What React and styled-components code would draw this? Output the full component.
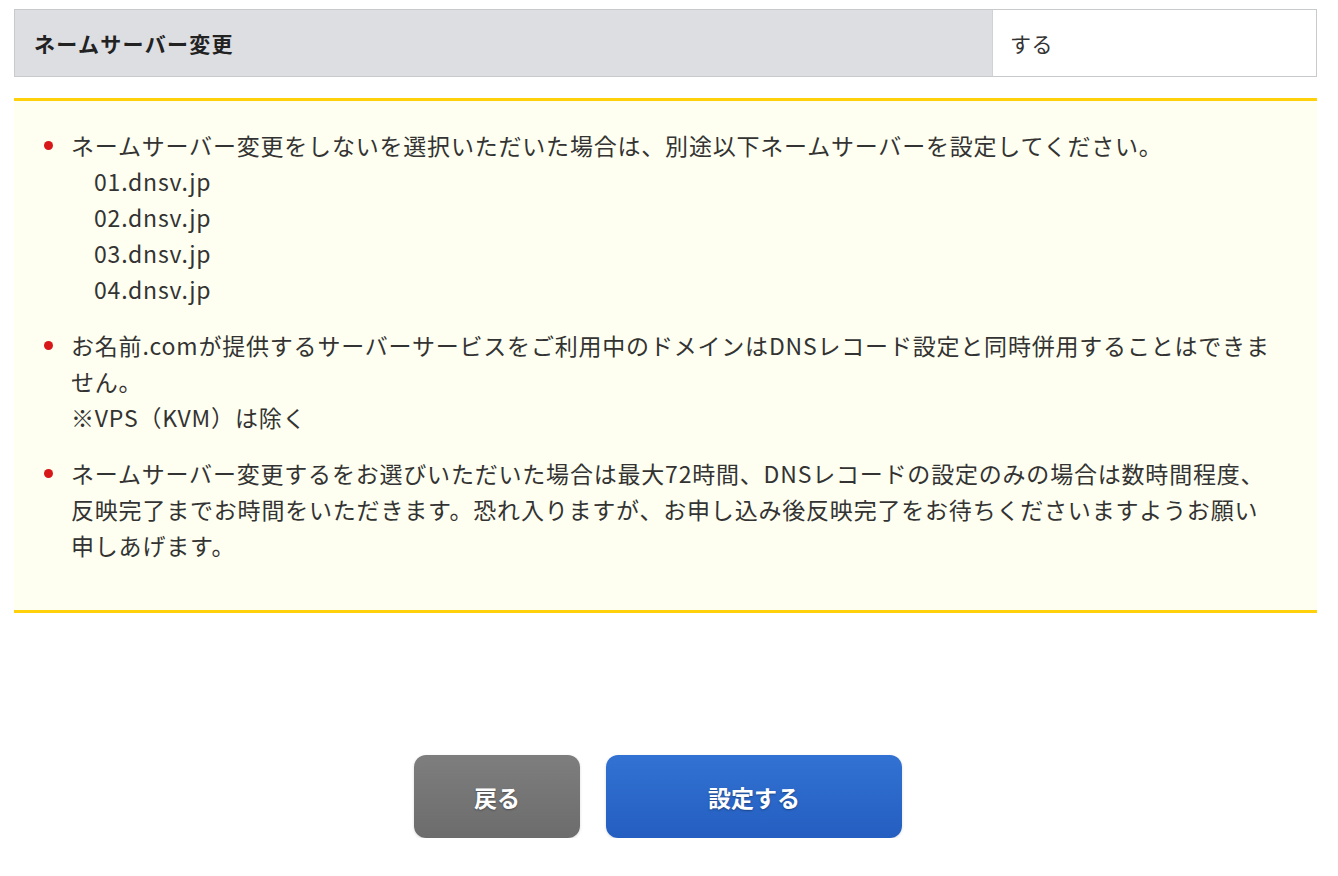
import styled, { createGlobalStyle } from "styled-components";

const GlobalStyle = createGlobalStyle`
  body {
    margin: 0;
    background: #fff;
    font-family: "Noto Sans CJK JP", "Liberation Sans", sans-serif;
    color: #333;
  }
`;

const Page = styled.div`
  padding: 9px 21px 0 14px;
`;

const SettingTable = styled.div`
  display: grid;
  grid-template-columns: 978px 1fr;
  height: 68px;
  border: 1px solid #c9cacc;
  box-sizing: border-box;
`;

const HeadCell = styled.div`
  display: flex;
  align-items: center;
  padding-left: 19px;
  background: #dcdee2;
  border-right: 1px solid #d0d2d6;
  font-size: 21px;
  letter-spacing: 1.3px;
  font-weight: bold;
  color: #222;
`;

const ValueCell = styled.div`
  display: flex;
  align-items: center;
  padding-left: 17px;
  background: #fff;
  font-size: 21px;
  letter-spacing: 0.5px;
  color: #333;
`;

const NoticeBox = styled.div`
  margin-top: 21px;
  background: #fefff0;
  border-top: 3px solid #ffd10a;
  border-bottom: 3px solid #ffd10a;
  padding: 26px 0 27px;
`;

const NoticeList = styled.ul`
  list-style: none;
  margin: 0 0 20px;
  padding: 0 34px 0 57px;
`;

const NoticeItem = styled.li`
  position: relative;
  font-size: 23px;
  line-height: 36px;
  letter-spacing: 0.8px;
  color: #333;

  & + & {
    margin-top: 20px;
  }

  &::before {
    content: "";
    position: absolute;
    left: -27px;
    top: 14px;
    width: 9px;
    height: 9px;
    border-radius: 50%;
    background: #d81818;
  }
`;

const ServerList = styled.div`
  padding-left: 23px;
`;

const ButtonRow = styled.div`
  display: flex;
  justify-content: center;
  gap: 26px;
  margin-top: 142px;
  padding-right: 15px;
`;

const Button = styled.button`
  width: ${(p) => (p.$primary ? "296px" : "166px")};
  height: 83px;
  border: none;
  border-radius: 12px;
  background: ${(p) =>
    p.$primary
      ? "linear-gradient(#3272d2, #245ec0)"
      : "linear-gradient(#7e7e7e, #6c6c6c)"};
  color: #fff;
  font-family: inherit;
  font-size: 23px;
  font-weight: bold;
  text-shadow: 0 1px 2px rgba(0, 0, 0, 0.35);
  box-shadow: 0 1px 3px rgba(0, 0, 0, 0.15);
  cursor: pointer;
`;

const servers = ["01.dnsv.jp", "02.dnsv.jp", "03.dnsv.jp", "04.dnsv.jp"];

const App = () => {
  return (
    <Page>
      <GlobalStyle />
      <SettingTable>
        <HeadCell>ネームサーバー変更</HeadCell>
        <ValueCell>する</ValueCell>
      </SettingTable>

      <NoticeBox>
        <NoticeList>
          <NoticeItem>
            ネームサーバー変更をしないを選択いただいた場合は、別途以下ネームサーバーを設定してください。
            <ServerList>
              {servers.map((s) => (
                <div key={s}>{s}</div>
              ))}
            </ServerList>
          </NoticeItem>
          <NoticeItem>
            お名前.comが提供するサーバーサービスをご利用中のドメインはDNSレコード設定と同時併用することはできません。
            <br />
            ※VPS（KVM）は除く
          </NoticeItem>
          <NoticeItem>
            ネームサーバー変更するをお選びいただいた場合は最大72時間、DNSレコードの設定のみの場合は数時間程度、反映完了までお時間をいただきます。恐れ入りますが、お申し込み後反映完了をお待ちくださいますようお願い
            <br />
            申しあげます。
          </NoticeItem>
        </NoticeList>
      </NoticeBox>

      <ButtonRow>
        <Button>戻る</Button>
        <Button $primary>設定する</Button>
      </ButtonRow>
    </Page>
  );
};

export default App;
